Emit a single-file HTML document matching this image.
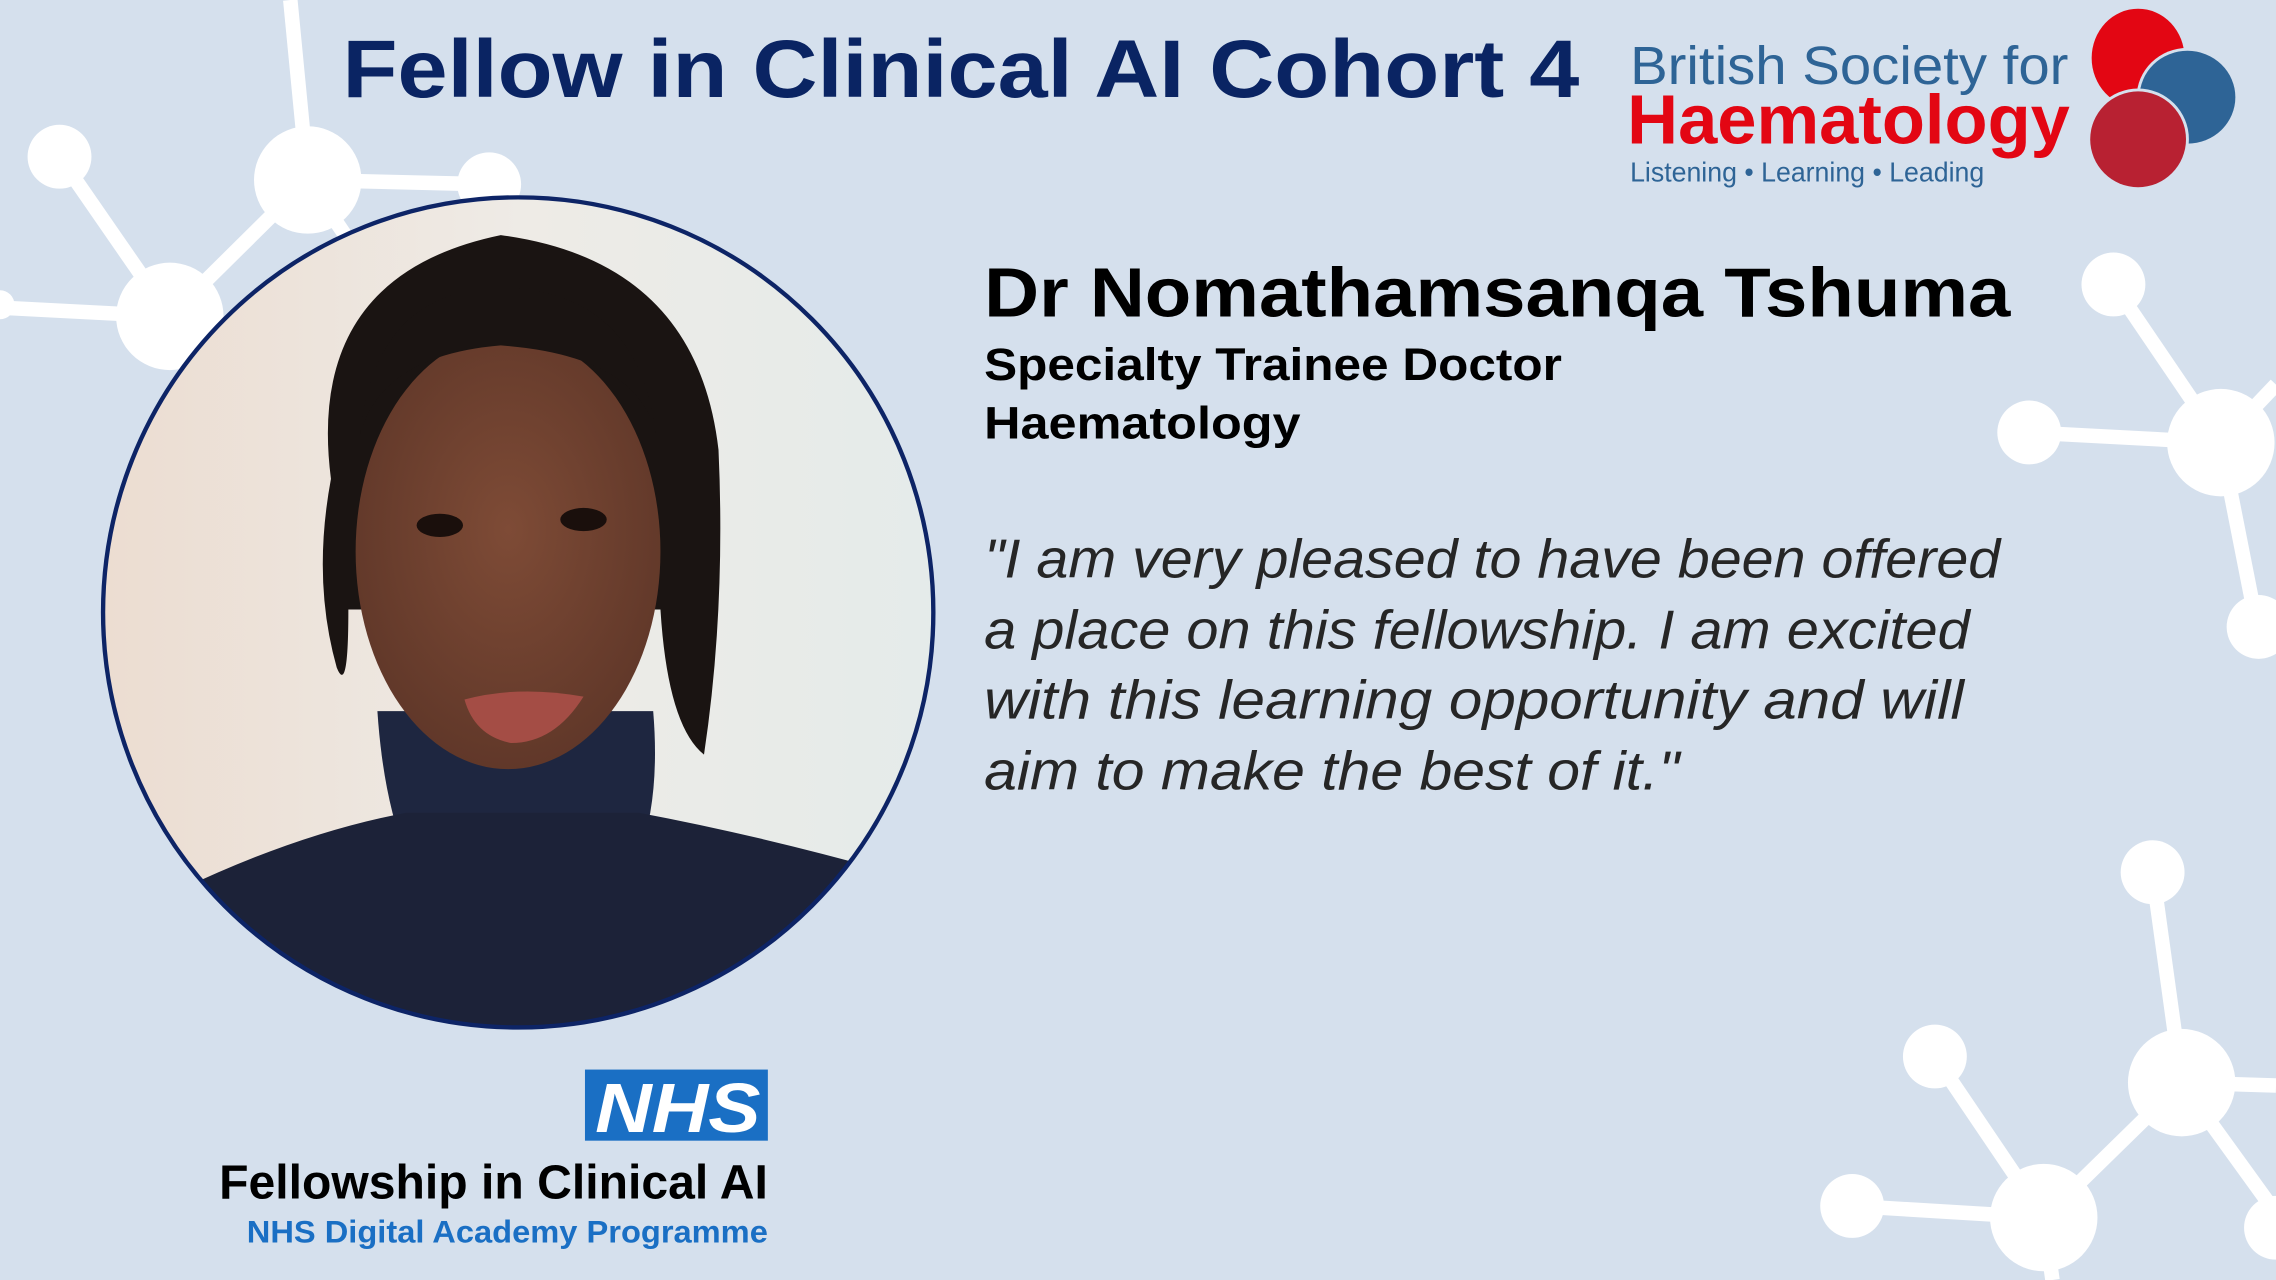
<!DOCTYPE html>
<html><head><meta charset="utf-8"><style>html,body{margin:0;padding:0;background:#d5e0ed;overflow:hidden}svg{display:block}</style></head>
<body>
<svg width="2276" height="1280" viewBox="0 0 1568 882" preserveAspectRatio="none" xmlns="http://www.w3.org/2000/svg">
<defs>
<clipPath id="pc"><circle cx="357" cy="422" r="286"/></clipPath>
<linearGradient id="bg" x1="0" y1="0" x2="1" y2="0"><stop offset="0" stop-color="#ecdcd0"/><stop offset="0.5" stop-color="#eeebe6"/><stop offset="1" stop-color="#e4ebea"/></linearGradient>
<radialGradient id="face" cx="0.5" cy="0.45" r="0.6"><stop offset="0" stop-color="#7e4b36"/><stop offset="1" stop-color="#5e3628"/></radialGradient>
</defs>
<rect width="1568" height="882" fill="#d5e0ed"/>
<g stroke="#fff" stroke-width="10" fill="#fff">
<line x1="200" y1="0" x2="212" y2="124"/><line x1="41" y1="108" x2="117" y2="218"/><line x1="117" y1="218" x2="212" y2="124"/><line x1="212" y1="124" x2="337" y2="127"/><line x1="117" y1="218" x2="0" y2="212"/><line x1="212" y1="124" x2="250" y2="180"/>
<line x1="1456" y1="196" x2="1530" y2="305"/><line x1="1398" y1="298" x2="1530" y2="305"/><line x1="1530" y1="305" x2="1568" y2="265"/><line x1="1530" y1="305" x2="1555" y2="432"/>
<line x1="1483" y1="601" x2="1503" y2="746"/><line x1="1503" y1="746" x2="1568" y2="748"/><line x1="1503" y1="746" x2="1568" y2="836"/><line x1="1503" y1="746" x2="1408" y2="839"/><line x1="1333" y1="728" x2="1408" y2="839"/><line x1="1276" y1="831" x2="1408" y2="839"/><line x1="1408" y1="839" x2="1414" y2="882"/>
</g>
<g fill="#fff">
<circle cx="41" cy="108" r="22"/><circle cx="212" cy="124" r="37"/><circle cx="337" cy="127" r="22"/><circle cx="117" cy="218" r="37"/><circle cx="0" cy="210" r="10"/>
<circle cx="1456" cy="196" r="22"/><circle cx="1530" cy="305" r="37"/><circle cx="1398" cy="298" r="22"/><circle cx="1556" cy="432" r="22"/>
<circle cx="1483" cy="601" r="22"/><circle cx="1503" cy="746" r="37"/><circle cx="1333" cy="728" r="22"/><circle cx="1408" cy="839" r="37"/><circle cx="1276" cy="831" r="22"/><circle cx="1568" cy="846" r="22"/>
</g>
<g clip-path="url(#pc)">
<rect x="60" y="130" width="600" height="600" fill="url(#bg)"/>
<path d="M228 330 Q210 190 345 162 Q480 180 495 310 Q500 420 485 520 Q460 500 455 420 L240 420 Q240 480 232 460 Q215 400 228 330Z" fill="#1a1412"/>
<path d="M260 490 Q264 550 280 590 L440 590 Q455 550 450 490 Z" fill="#1e2640"/>
<path d="M110 620 Q200 575 280 560 L440 560 Q520 575 610 600 L660 740 L60 740 Z" fill="#1c2238"/>
<ellipse cx="350" cy="380" rx="105" ry="150" fill="url(#face)"/>
<path d="M248 300 Q258 200 345 198 Q440 200 452 300 Q440 245 345 238 Q262 245 248 300Z" fill="#1a1412"/>
<ellipse cx="303" cy="362" rx="16" ry="8" fill="#1a0f0c"/><ellipse cx="402" cy="358" rx="16" ry="8" fill="#1a0f0c"/>
<path d="M320 482 Q357 472 402 480 Q382 512 352 512 Q327 507 320 482Z" fill="#a44d45"/>
</g>
<circle cx="357" cy="422" r="286" fill="none" stroke="#0d2466" stroke-width="3"/>
<g font-family="'Liberation Sans',sans-serif">
<text x="236" y="67" font-size="56" font-weight="bold" fill="#0a2463" textLength="852" lengthAdjust="spacingAndGlyphs">Fellow in Clinical AI Cohort 4</text>
<text x="1123" y="58" font-size="37" fill="#2e6496" textLength="302" lengthAdjust="spacingAndGlyphs">British Society for</text>
<text x="1121" y="99" font-size="48" font-weight="bold" fill="#e30613" textLength="305" lengthAdjust="spacingAndGlyphs">Haematology</text>
<text x="1123" y="125" font-size="19" fill="#2e6496" textLength="244" lengthAdjust="spacingAndGlyphs">Listening • Learning • Leading</text>
<text x="678" y="218" font-size="48" font-weight="bold" fill="#000" textLength="707" lengthAdjust="spacingAndGlyphs">Dr Nomathamsanqa Tshuma</text>
<text x="678" y="262" font-size="31" font-weight="bold" fill="#000" textLength="398" lengthAdjust="spacingAndGlyphs">Specialty Trainee Doctor</text>
<text x="678" y="302" font-size="31" font-weight="bold" fill="#000" textLength="218" lengthAdjust="spacingAndGlyphs">Haematology</text>
<g font-size="38" font-style="italic" fill="#262626">
<text x="678" y="398" textLength="700" lengthAdjust="spacingAndGlyphs">"I am very pleased to have been offered</text>
<text x="678" y="447" textLength="679" lengthAdjust="spacingAndGlyphs">a place on this fellowship. I am excited</text>
<text x="678" y="495" textLength="675" lengthAdjust="spacingAndGlyphs">with this learning opportunity and will</text>
<text x="678" y="544" textLength="479" lengthAdjust="spacingAndGlyphs">aim to make the best of it."</text>
</g>
<rect x="403" y="737" width="126" height="49" fill="#1a6fc4"/>
<text x="410" y="780" font-size="48" font-weight="bold" font-style="italic" fill="#fff" textLength="114" lengthAdjust="spacingAndGlyphs">NHS</text>
<text x="151" y="826" font-size="33" font-weight="bold" fill="#000" textLength="378" lengthAdjust="spacingAndGlyphs">Fellowship in Clinical AI</text>
<text x="170" y="856" font-size="22" font-weight="bold" fill="#1a6fc4" textLength="359" lengthAdjust="spacingAndGlyphs">NHS Digital Academy Programme</text>
</g>
<ellipse cx="1473" cy="40" rx="32" ry="34" fill="#e30613"/>
<ellipse cx="1507" cy="67" rx="35" ry="34" fill="#d5e0ed"/>
<ellipse cx="1507" cy="67" rx="33" ry="32" fill="#2e6496"/>
<ellipse cx="1473" cy="96" rx="35" ry="35" fill="#d5e0ed"/>
<ellipse cx="1473" cy="96" rx="33" ry="33" fill="#b82132"/>
</svg>
</body></html>
